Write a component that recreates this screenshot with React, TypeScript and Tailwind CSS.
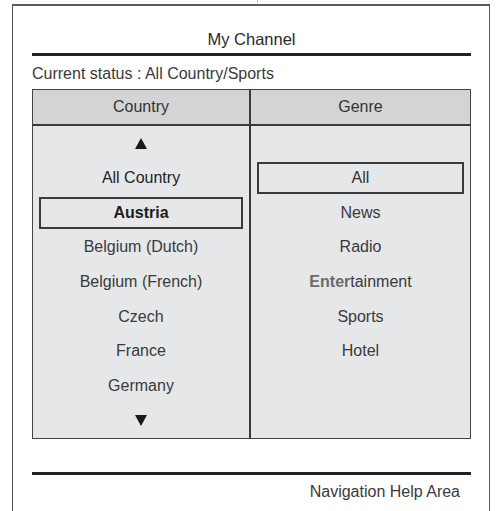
import React from "react";

const Up = () => (
  <svg width="12" height="11" viewBox="0 0 12 11"><polygon points="6,0 12,11 0,11" fill="#1a1a1a" /></svg>
);
const Down = () => (
  <svg width="12" height="11" viewBox="0 0 12 11"><polygon points="0,0 12,0 6,11" fill="#1a1a1a" /></svg>
);

function Row({ children, boxed }: { children?: React.ReactNode; boxed?: boolean }) {
  return (
    <div className="h-[34.67px] flex items-center justify-center">
      {boxed ? (
        <div className="mx-[6px] w-full h-[32px] border-2 border-[#3a3a3a] flex items-center justify-center">
          {children}
        </div>
      ) : (
        children
      )}
    </div>
  );
}

export default function App() {
  return (
    <div className="w-[498px] h-[511px] bg-white overflow-hidden pt-[4px] pl-[12px] pr-[8px] font-['Liberation_Sans',Arial,sans-serif] text-[#3a3a3a] relative">
      <div className="absolute left-[257px] top-0 w-[1px] h-[2px] bg-[#aaa]" />
      <div className="h-full border-l-[1.5px] border-t-2 border-r-[1.5px] border-[#5a5a5a] pl-[19px]">
        <div className="w-[439px]">
          <div className="h-[47px] flex items-end justify-center pb-[4px]">
            <span className="text-[16.5px] leading-[20px] text-[#2a2a2a]">My Channel</span>
          </div>
          <div className="h-[3px] bg-[#222]" />
          <div className="mt-[8px] text-[16px] leading-[20px] text-[#3a3a3a]">Current status : All Country/Sports</div>
          <div className="mt-[5px] border-[1.5px] border-[#444] grid grid-cols-[218px_1fr]">
            <div className="col-span-2 grid grid-cols-[218px_1fr] bg-[#d3d4d6] border-b-2 border-[#3a3a3a] h-[36px]">
              <div className="flex items-center justify-center border-r-2 border-[#3a3a3a] text-[16px] text-[#333]">Country</div>
              <div className="flex items-center justify-center text-[16px] text-[#333]">Genre</div>
            </div>
            <div className="bg-[#e6e7e9] border-r-2 border-[#3a3a3a] text-[16px]">
              <Row><Up /></Row>
              <Row><span className="text-[#1e1e1e]">All Country</span></Row>
              <Row boxed><span className="font-bold text-[#1e1e1e]">Austria</span></Row>
              <Row>Belgium (Dutch)</Row>
              <Row>Belgium (French)</Row>
              <Row>Czech</Row>
              <Row>France</Row>
              <Row>Germany</Row>
              <Row><Down /></Row>
            </div>
            <div className="bg-[#e6e7e9] text-[16px]">
              <Row />
              <Row boxed><span className="text-[#333]">All</span></Row>
              <Row>News</Row>
              <Row>Radio</Row>
              <Row><span><span className="font-bold text-[#6a6a6a]">Enter</span>tainment</span></Row>
              <Row>Sports</Row>
              <Row>Hotel</Row>
              <Row />
              <Row />
            </div>
          </div>
          <div className="mt-[33px] h-[3px] bg-[#222]" />
          <div className="mt-[7px] pr-[11px] text-right text-[16px] leading-[20px] text-[#3a3a3a]">Navigation Help Area</div>
        </div>
      </div>
    </div>
  );
}
